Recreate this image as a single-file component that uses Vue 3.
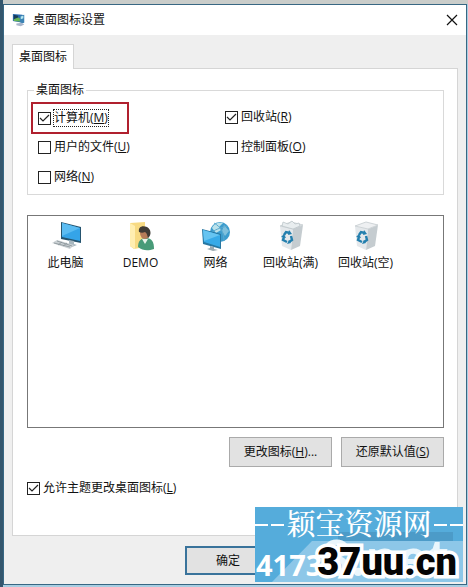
<script setup>
import { ref } from "vue";

const options = ref([
  { id: "computer", text: "计算机", letter: "M", checked: true },
  { id: "recycle", text: "回收站", letter: "R", checked: true },
  { id: "files", text: "用户的文件", letter: "U", checked: false },
  { id: "control", text: "控制面板", letter: "O", checked: false },
  { id: "network", text: "网络", letter: "N", checked: false },
]);
const icons = [
  { id: "pc", text: "此电脑" },
  { id: "user", text: "DEMO" },
  { id: "net", text: "网络" },
  { id: "full", text: "回收站(满)" },
  { id: "empty", text: "回收站(空)" },
];
const allowTheme = ref(true);
</script>

<template>
  <div class="desktop">
    <main class="window">
      <header class="titlebar">
        <svg class="logo" viewBox="0 0 16 16">
          <path d="M1 1l11 1v9L1 9z" fill="#2b6db0" />
          <path d="M2 2l5 1v3L2 7z" fill="#173d5c" />
          <path d="M2 7l5-2 5 3v2L2 9z" fill="#66b455" />
          <path d="M9 3l5-1v9l-3 1-2-2z" fill="#3c83b4" />
          <path d="M10 4l3-1v3l-3 1z" fill="#b6e6ef" />
          <path d="M5 12l6-1 3 2-4 2-5-1z" fill="#a9b6cb" />
        </svg>
        <h1>桌面图标设置</h1>
        <button class="close" aria-label="关闭">
          <svg viewBox="0 0 12 12"><path d="M1 1l10 10M11 1L1 11" fill="none" stroke="#111" stroke-width="1.2" /></svg>
        </button>
      </header>

      <div class="body">
        <div class="tabs"><button class="tab">桌面图标</button></div>
        <section class="panel">
          <fieldset>
            <legend>桌面图标</legend>
            <div class="options">
              <div v-for="item in options" :key="item.id" :class="['option', item.id]">
                <label>
                  <input type="checkbox" v-model="item.checked" />
                  <span>{{ item.text }}(<u>{{ item.letter }}</u>)</span>
                </label>
              </div>
            </div>
          </fieldset>

          <ul class="icons">
            <li v-for="icon in icons" :key="icon.id">
              <svg v-if="icon.id === 'pc'" viewBox="0 0 32 32">
                <path d="M11 2l20 5v16l-20-4z" fill="#25546f" />
                <path d="M12 3l18 5v13l-18-4z" fill="#35a4e8" />
                <path d="M12 3l18 5-18 8z" fill="#5bbcf2" />
                <path d="M19 20l5 1v3l3 1-5 2-6-2 3-1z" fill="#a8b7bf" />
                <path d="M2 23l5-3 17 5-4 4z" fill="#cbd1d4" />
                <path d="M4 23l16 4M7 21l15 5M8 25l4-3m1 4l4-3" fill="none" stroke="#899398" stroke-width=".8" />
              </svg>
              <svg v-else-if="icon.id === 'user'" viewBox="0 0 32 32">
                <path d="M5 3l15-1v25l-11 2-4-3z" fill="#f7da83" />
                <path d="M5 3l5 3v23l-5-3z" fill="#ffeeb1" />
                <path d="M13 27c0-6 3-9 8-9 6 0 8 4 8 11-6 2-11 2-16-2z" fill="#489b78" />
                <path d="M17 19l3 5 3-5z" fill="#e9f2e9" />
                <ellipse cx="20" cy="13" rx="5" ry="6" fill="#b77c58" />
                <path d="M14 12c-1-5 3-7 8-5 4 2 5 8 1 11-1-3-1-5-3-6-2 1-4 1-6 0z" fill="#403b34" />
              </svg>
              <svg v-else-if="icon.id === 'net'" viewBox="0 0 32 32">
                <circle cx="20" cy="12" r="10" fill="#3c9ccd" />
                <path d="M12 8c2-5 7-6 11-5l-4 4 2 3-5 3z" fill="#bae1ea" />
                <path d="M24 5l5 6-4 5-3-5z" fill="#7fc0dc" />
                <path d="M14 3c7 4 10 10 10 18M27 6c-5 2-10 2-16 7" fill="none" stroke="#5aaad0" />
                <path d="M2 9l19 5v15L3 24z" fill="#2777a2" />
                <path d="M3 10l17 5v12L4 22z" fill="#37aae8" />
                <path d="M3 10l17 5-16 6z" fill="#66c4f1" />
                <path d="M10 26l4 1v2l4 1-5 1-6-2 3-1z" fill="#9aaab2" />
              </svg>
              <svg v-else viewBox="0 0 32 32">
                <path d="M5 6l13 3-2 21-9-4z" fill="#e4e8eb" />
                <path d="M18 9l10-4-3 21-9 4z" fill="#c5ccd0" />
                <path d="M5 6l11-4 12 3-10 4z" fill="#eef0f2" stroke="#ced4d7" />
                <path v-if="icon.id === 'full'" d="M7 6l1-4 5 2 4-3 3 3 4-1 1 3-7 3z" fill="#e8edef" stroke="#b8c1c6" stroke-width=".7" />
                <path d="M9 15l2-3 4 1M16 16l1 4-3 2M12 22l-4-2 1-3" fill="none" stroke="#237fae" stroke-width="2.4" />
                <path d="M14 10l3 4-4 1zM16 23l-4 1 2-4zM6 17l3-3 2 4z" fill="#237fae" />
              </svg>
              <span>{{ icon.text }}</span>
            </li>
          </ul>

          <div class="actions">
            <button class="push">更改图标(<u>H</u>)...</button>
            <button class="push">还原默认值(<u>S</u>)</button>
          </div>
          <label class="theme">
            <input type="checkbox" v-model="allowTheme" />
            <span>允许主题更改桌面图标(<u>L</u>)</span>
          </label>
        </section>
        <footer><button class="push ok">确定</button></footer>
      </div>

      <aside class="watermark">
        <svg class="shade" viewBox="0 0 208 75" preserveAspectRatio="none">
          <path d="M17 75l40-41h151v41z" fill="#8dc7e8" />
          <path d="M83 25h115v9H83z" fill="#4c9bc8" />
        </svg>
        <p class="site"><i></i><span>颖宝资源网</span><i></i></p>
        <p class="number">4173<span>8.net</span></p>
        <p class="domain">37uu.cn</p>
      </aside>
    </main>
  </div>
</template>

<style>
body {
  margin: 0;
  background: #b5d5e5;
}
</style>

<style scoped>
* {
  box-sizing: border-box;
}

.desktop {
  padding: 4px 1px 2px 3px;
  background: linear-gradient(to right, #34566d 3px, transparent 3px), linear-gradient(#cacdca 4px, #a9cee2 4px);
  font: 12px/16px "Open Sans", "Noto Sans CJK SC", sans-serif;
  color: #111;
}

.window {
  position: relative;
  border: 1px solid #386783;
  background: #efefef;
}

.titlebar {
  display: flex;
  align-items: center;
  height: 30px;
  padding: 0 8px;
  background: white;
}

.logo {
  width: 14px;
  height: 16px;
}

h1 {
  margin: 0 auto 0 7px;
  font-size: 12px;
  font-weight: 400;
}

button {
  font: inherit;
  color: inherit;
}

.close {
  width: 12px;
  height: 12px;
  padding: 0;
  border: none;
  background: none;
}

.close svg {
  display: block;
}

.body {
  padding: 9px 8px 9px;
}

.tabs {
  display: flex;
}

.tab {
  height: 25px;
  padding: 0 6px;
  margin-bottom: -1px;
  border: 1px solid #d5d5d5;
  border-bottom: none;
  background: white;
  z-index: 1;
}

.panel {
  height: 468px;
  padding: 13px 13px 0 14px;
  border: 1px solid #d5d5d5;
  background: white;
}

fieldset {
  min-width: 0;
  height: 113px;
  margin: 0;
  padding: 4px 3px;
  border: 1px solid #d9d9d9;
}

legend {
  padding: 0 2px;
  margin-left: 3px;
}

.options {
  display: grid;
  grid-template-columns: 187px 1fr;
  grid-auto-rows: 30px;
}

.option {
  display: flex;
  align-items: center;
  padding-left: 7px;
}

.computer {
  width: 98px;
  height: 32px;
  padding-left: 5px;
  border: 2px solid #b0202e;
}

.computer span {
  outline: 1px dotted #222;
}

label {
  display: flex;
  align-items: center;
  gap: 3px;
}

input {
  appearance: none;
  width: 13px;
  height: 13px;
  margin: 0;
  border: 1px solid #222;
  background: white;
}

input:checked {
  background: url("data:image/svg+xml,%3Csvg xmlns='http://www.w3.org/2000/svg' viewBox='0 0 11 11'%3E%3Cpath d='M1 5l3 3 6-6' fill='none' stroke='%23222' stroke-width='1.2'/%3E%3C/svg%3E");
}

u {
  text-underline-offset: 1px;
}

.icons {
  display: flex;
  height: 213px;
  margin: 20px 0 0;
  padding: 4px 0;
  list-style: none;
  border: 1px solid #777;
}

.icons li {
  display: flex;
  flex-direction: column;
  align-items: center;
  width: 75px;
  gap: 3px;
}

.icons svg {
  width: 32px;
  height: 32px;
}

.actions {
  display: flex;
  justify-content: flex-end;
  gap: 9px;
  margin-top: 9px;
}

.push {
  width: 103px;
  height: 30px;
  padding: 0;
  border: 1px solid #aaa;
  background: #e2e2e2;
}

.theme {
  margin-top: 13px;
}

footer {
  padding: 10px 0 0 173px;
}

.ok {
  width: 86px;
  height: 29px;
  border: 2px solid #39739b;
}

.watermark {
  position: absolute;
  right: 3px;
  bottom: 2px;
  width: 208px;
  height: 75px;
  background: #55acdb;
  color: white;
}

.shade {
  position: absolute;
  width: 100%;
  height: 100%;
}

.watermark p {
  position: absolute;
  margin: 0;
  white-space: nowrap;
}

.watermark .site {
  top: 2px;
  display: flex;
  align-items: center;
  justify-content: space-between;
  width: 100%;
  font: 500 29px/32px "Liberation Serif", "Noto Serif CJK SC", "Noto Sans CJK SC", serif;
}

.site i {
  width: 29px;
  height: 2px;
  background: linear-gradient(to right, white 13px, transparent 13px 16px, white 16px);
}

.watermark .number {
  left: 1px;
  bottom: 0;
  display: flex;
  align-items: baseline;
  font: bold 29px/34px "Open Sans", sans-serif;
}

.number span {
  font-size: 50px;
  color: #eaf6fc;
}

.watermark .domain {
  right: 6px;
  bottom: 0;
  font: 900 38px/40px Roboto, sans-serif;
  color: #050505;
  -webkit-text-stroke: 7px white;
  paint-order: stroke fill;
}
</style>
